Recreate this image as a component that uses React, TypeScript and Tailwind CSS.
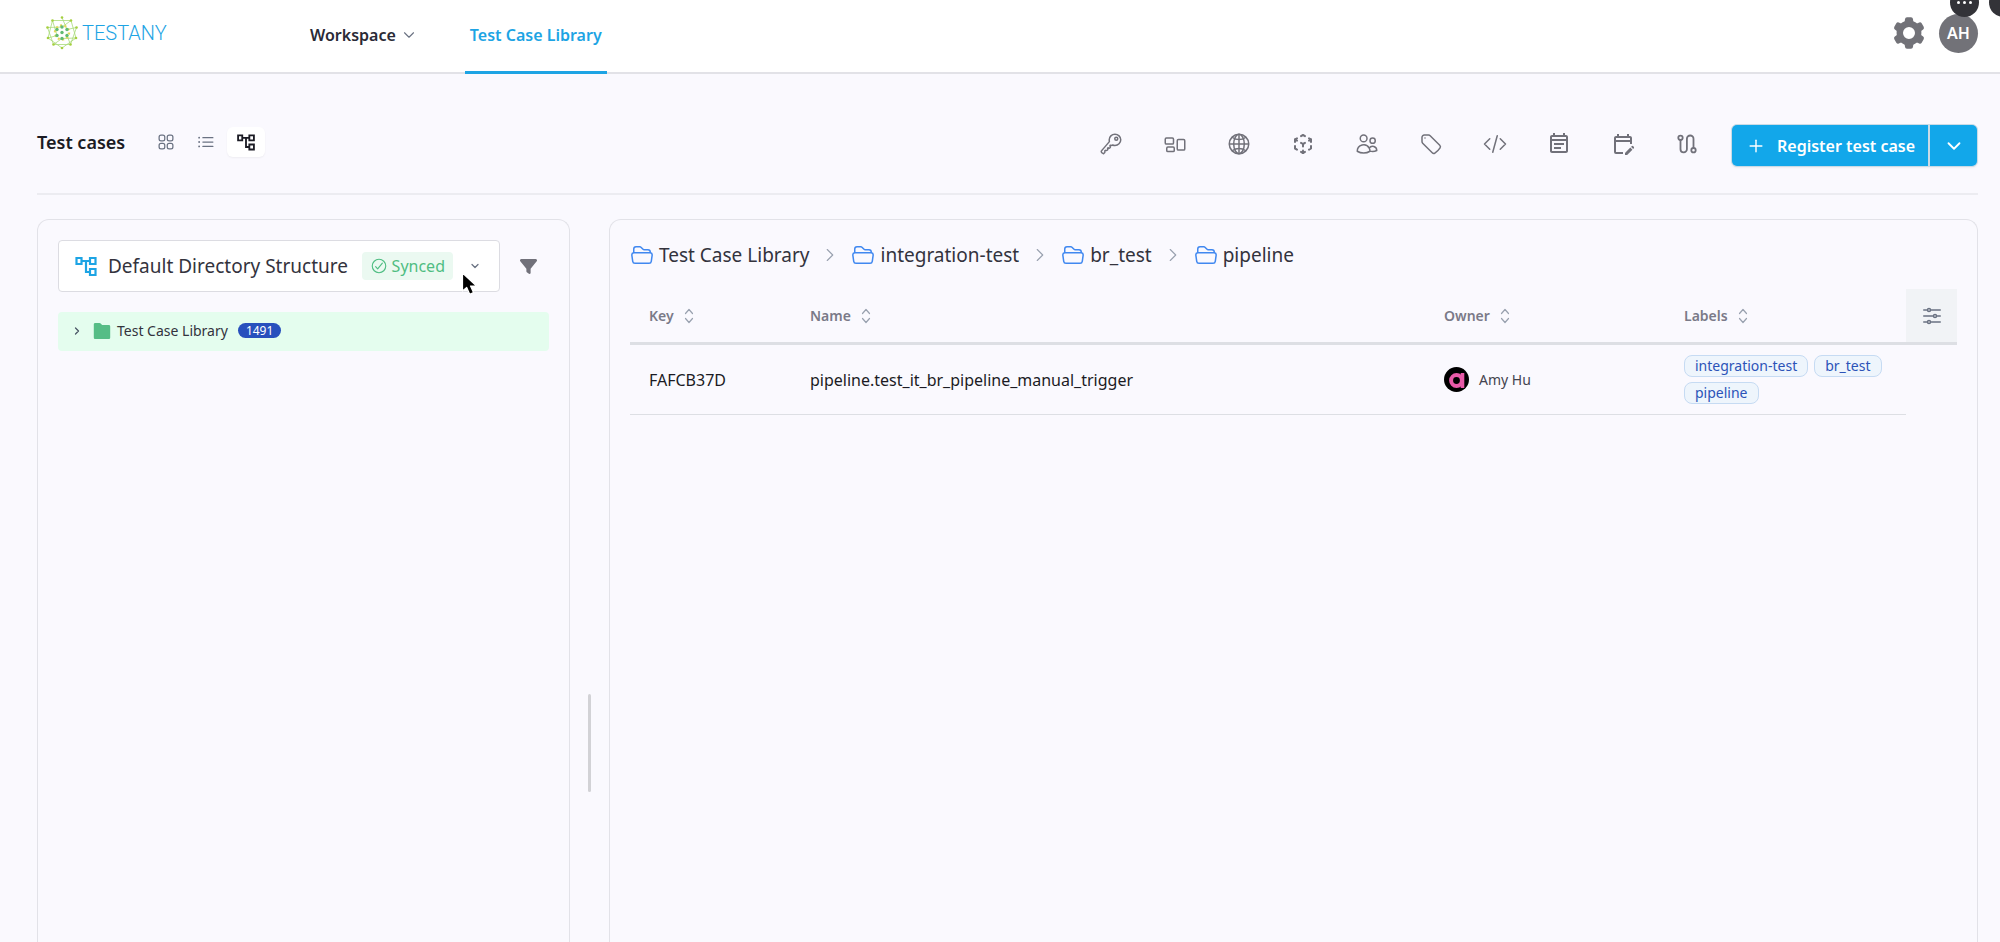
import type { ReactNode } from "react";
import { FaFilter } from "react-icons/fa6";
import {
  HiOutlineAdjustmentsHorizontal,
  HiOutlineCodeBracket,
  HiOutlineFolderOpen,
  HiOutlineListBullet,
  HiOutlineRectangleGroup,
  HiOutlineSquares2X2,
  HiOutlineTag,
  HiOutlineUsers,
} from "react-icons/hi2";
import { IoCheckmarkCircleOutline, IoGlobeOutline, IoKeyOutline } from "react-icons/io5";
import { MdOutlineEditCalendar, MdOutlineEventNote } from "react-icons/md";
import { TbCube3dSphere } from "react-icons/tb";
import { ChevronDown, ChevronRight, Plus } from "lucide-react";

interface Tool {
  label: string;
  icon: ReactNode;
}

interface TestCase {
  key: string;
  name: string;
  owner: string;
  labels: string[];
}

const tools: Tool[] = [
  { label: "Credentials", icon: <IoKeyOutline size={24} /> },
  { label: "Groups", icon: <HiOutlineRectangleGroup size={24} /> },
  { label: "Environments", icon: <IoGlobeOutline size={26} /> },
  { label: "Packages", icon: <TbCube3dSphere size={24} /> },
  { label: "Users", icon: <HiOutlineUsers size={24} /> },
  { label: "Tags", icon: <HiOutlineTag size={24} /> },
  { label: "Code", icon: <HiOutlineCodeBracket size={24} /> },
  { label: "Plans", icon: <MdOutlineEventNote size={24} /> },
  { label: "Edit schedule", icon: <MdOutlineEditCalendar size={24} /> },
  { label: "Pipelines", icon: <RouteIcon /> },
];

const crumbs = ["Test Case Library", "integration-test", "br_test", "pipeline"];

const columns = [
  { title: "Key", width: "w-[161px]" },
  { title: "Name", width: "w-auto" },
  { title: "Owner", width: "w-60" },
  { title: "Labels", width: "w-[241px]" },
];

const testCases: TestCase[] = [
  {
    key: "FAFCB37D",
    name: "pipeline.test_it_br_pipeline_manual_trigger",
    owner: "Amy Hu",
    labels: ["integration-test", "br_test", "pipeline"],
  },
];

function RouteIcon() {
  return (
    <svg width="24" height="24" viewBox="0 0 24 24" fill="none" stroke="currentColor" strokeWidth="1.8">
      <circle cx="5.5" cy="5.8" r="2.2" />
      <circle cx="18.5" cy="18.2" r="2.2" />
      <path d="M5.5 8v9.2a3.2 3.2 0 0 0 6.4 0V6.8a3.3 3.3 0 0 1 6.6 0V16" />
    </svg>
  );
}

function GearIcon() {
  const teeth = [0, 60, 120, 180, 240, 300];
  return (
    <svg width="32" height="32" viewBox="0 0 32 32" fill="none" stroke="currentColor">
      <circle cx="16" cy="16" r="9.2" strokeWidth="6.4" />
      {teeth.map((angle) => (
        <path
          key={angle}
          d="M13.6 5.2 14 2.2h4l.4 3z"
          fill="currentColor"
          strokeWidth="4"
          strokeLinejoin="round"
          transform={`rotate(${angle} 16 16)`}
        />
      ))}
    </svg>
  );
}

function TreeIcon({ size }: { size: number }) {
  return (
    <svg width={size} height={size} viewBox="0 0 24 24" fill="none" stroke="currentColor" strokeWidth="2.2">
      <path d="M2.500 4h5v6h-5zM16 4h5.500v6H16zM16 15h5.500v6H16zM8 7h8M12 7v11h4" />
    </svg>
  );
}

function FolderIcon() {
  return (
    <svg width="18" height="18" viewBox="0 0 18 18" className="text-[#56bd86]">
      <path
        fill="currentColor"
        d="M2.2 1h4.3c.5 0 .9.2 1.2.5l1.4 1.6h6.7c.8 0 1.4.6 1.4 1.4v10.9c0 .9-.7 1.6-1.6 1.6H2.4C1.5 17 .8 16.3.8 15.4V2.4C.8 1.6 1.4 1 2.2 1z"
      />
    </svg>
  );
}

function SortIcon() {
  return (
    <svg
      width="10"
      height="16"
      viewBox="0 0 10 16"
      fill="none"
      stroke="currentColor"
      strokeWidth="1.2"
      strokeLinecap="round"
      strokeLinejoin="round"
      className="text-gray-400"
    >
      <path d="M1.5 5.5 5 1.5l3.5 4M1.5 10.5l3.5 4 3.5-4" />
    </svg>
  );
}

function Logo() {
  const outer = [
    [16, 1.5], [25, 4.5], [30.5, 11.5], [30, 22], [24.5, 28.5],
    [16, 32], [7.5, 28.5], [2, 22], [1.5, 11.5], [6.5, 4.5],
  ];
  const inner = [
    [16, 16.5], [16, 11], [21, 13.5], [21, 19.5], [16, 22.5], [11, 19.5], [11, 13.5],
  ];
  return (
    <svg width="32" height="34" viewBox="0 0 32 34" fill="none">
      <path
        d="M6.5 4.5 25 4.5 30 22 16 32 2 22 6.5 4.5M16 1.5 21 13.5 30.5 11.5 24.5 28.5 7.5 28.5 1.5 11.5 16 11M6.5 4.5 11 19.5 2 22M25 4.5 16 11M30 22 16 22.5 7.5 28.5M24.5 28.5 21 19.5"
        stroke="#a8da78"
        strokeWidth="0.8"
      />
      <circle cx="16" cy="16.5" r="7" stroke="#e3d95a" strokeWidth="2.4" strokeDasharray="2 2.4" />
      {outer.map(([x, y]) => (
        <circle key={`${x}-${y}`} cx={x} cy={y} r="1.3" fill="#a5cf3f" />
      ))}
      {inner.map(([x, y]) => (
        <circle key={`${x}-${y}`} cx={x} cy={y} r="1.7" fill="#62bb72" />
      ))}
    </svg>
  );
}

function Cursor() {
  return (
    <svg
      width="18"
      height="26"
      viewBox="0 0 18 26"
      className="pointer-events-none absolute top-[31px] right-5"
    >
      <path
        d="M1.5 1v18l4.2-3.6 3 6.8 3.8-1.6-3-6.6h6z"
        fill="#000"
        stroke="#fff"
        strokeWidth="1.2"
        strokeLinejoin="round"
      />
    </svg>
  );
}

function Header() {
  return (
    <header className="relative flex h-[74px] items-stretch border-b-2 border-[#e2e2e7] bg-white pr-[22px] pl-[46px]">
      <a href="#home" className="flex w-[264px] items-center gap-1 pb-1.5">
        <Logo />
        <span className="font-[Roboto] text-xl leading-6 font-light text-[#1da4e4]">TESTANY</span>
      </a>
      <nav className="flex text-base font-semibold">
        <button type="button" className="flex items-center gap-1 pb-0.5 text-[#2a2a36]">
          Workspace
          <ChevronDown size={18} strokeWidth={1.5} className="text-gray-500" />
        </button>
        <a
          href="#library"
          className="-mb-0.5 ml-[47px] flex items-center border-b-3 border-[#1da4e4] px-[5px] pb-0.5 text-[#1da4e4]"
        >
          Test Case Library
        </a>
      </nav>
      <div className="ml-auto flex items-center gap-3.5 pb-1.5">
        <button type="button" aria-label="Settings" className="text-[#727278]">
          <GearIcon />
        </button>
        <button
          type="button"
          className="flex size-[39px] items-center justify-center rounded-full bg-[#727278] text-base font-semibold text-white"
        >
          AH
        </button>
      </div>
      <div className="absolute top-0 right-0 flex h-[17px] w-[50px] gap-2.5 overflow-hidden">
        <span className="-mt-3 flex size-[29px] shrink-0 items-center justify-center gap-[3px] rounded-full bg-[#333338]">
          <i className="size-[3px] rounded-full bg-white" />
          <i className="size-[3px] rounded-full bg-white" />
          <i className="size-[3px] rounded-full bg-white" />
        </span>
        <span className="-mt-3 size-[29px] shrink-0 rounded-full bg-[#333338]" />
      </div>
    </header>
  );
}

function Toolbar() {
  return (
    <div className="flex h-[121px] items-center border-b-2 border-[#ececf1] pt-7">
      <h1 className="pb-3 text-lg font-semibold text-[#1b1b24]">Test cases</h1>
      <div className="ml-[22px] flex items-center gap-[2px] pb-3 text-gray-500">
        <button type="button" aria-label="Grid view" className="flex h-[30px] w-[38px] items-center justify-center">
          <HiOutlineSquares2X2 size={20} />
        </button>
        <button type="button" aria-label="List view" className="flex h-[30px] w-[38px] items-center justify-center">
          <HiOutlineListBullet size={20} />
        </button>
        <button
          type="button"
          aria-label="Tree view"
          className="flex h-[30px] w-[38px] items-center justify-center rounded-md bg-white text-[#1b1b24] shadow-xs"
        >
          <TreeIcon size={20} />
        </button>
      </div>
      <div className="ml-auto flex items-center gap-10 pb-2 text-[#71717a]">
        {tools.map((tool) => (
          <button
            key={tool.label}
            type="button"
            aria-label={tool.label}
            className="flex size-6 items-center justify-center"
          >
            {tool.icon}
          </button>
        ))}
      </div>
      <div className="mb-1 ml-8 flex h-[43px] overflow-hidden rounded-md border border-[#c9dbe6] bg-[#c9dbe6] text-white shadow-xs">
        <button type="button" className="flex w-[196px] items-center gap-[11px] bg-[#12a7ea] pl-3.5 text-base font-semibold whitespace-nowrap">
          <Plus size={20} strokeWidth={1.7} />
          Register test case
        </button>
        <button
          type="button"
          aria-label="More register options"
          className="ml-0.5 flex w-[47px] items-center justify-center bg-[#12a7ea]"
        >
          <ChevronDown size={22} strokeWidth={2} />
        </button>
      </div>
    </div>
  );
}

function DirectoryPanel() {
  return (
    <aside className="w-[533px] shrink-0 rounded-t-xl border border-b-0 border-[#e2e2e8] px-5 pt-5">
      <div className="flex items-center">
        <button
          type="button"
          className="relative flex h-[52px] w-[442px] items-center rounded-sm border border-[#dcdce2] bg-white pl-[15px]"
        >
          <span className="text-[#1da4e4]">
            <TreeIcon size={24} />
          </span>
          <span className="ml-2.5 text-[19px] whitespace-nowrap text-[#33333d]">
            Default Directory Structure
          </span>
          <span className="ml-auto flex h-7 items-center gap-1 rounded-sm bg-[#ebf9f1] px-2 text-base text-[#4fbd82]">
            <IoCheckmarkCircleOutline size={18} />
            Synced
          </span>
          <ChevronDown size={12} strokeWidth={2.5} className="mr-[18px] ml-4 text-gray-500" />
          <Cursor />
        </button>
        <button type="button" aria-label="Filter" className="ml-5 text-[#71717a]">
          <FaFilter size={17} />
        </button>
      </div>
      <div className="mt-5 flex h-[39px] items-center rounded-sm bg-[#e4fdee] pb-0.5 pl-[13px]">
        <button type="button" aria-label="Expand" className="text-gray-600">
          <ChevronRight size={12} strokeWidth={2.5} />
        </button>
        <span className="mr-1.5 ml-2.5">
          <FolderIcon />
        </span>
        <span className="text-[14px] text-[#33333d]">Test Case Library</span>
        <span className="ml-2.5 rounded-full bg-[#2850bd] px-2 text-xs leading-[15px] text-white">1491</span>
      </div>
    </aside>
  );
}

function CasesPanel() {
  return (
    <section className="min-w-0 flex-1 rounded-t-xl border border-b-0 border-[#e2e2e8] px-5 pt-[19px]">
      <nav aria-label="Breadcrumb" className="flex h-8 items-center">
        {crumbs.map((crumb, i) => (
          <div key={crumb} className="flex items-center">
            {i > 0 && (
              <ChevronRight size={22} strokeWidth={1.2} className="mx-2.5 text-gray-400" />
            )}
            <a href={`#${crumb}`} className="flex items-center gap-[5px] text-[19px] text-[#33333d]">
              <HiOutlineFolderOpen size={24} className="text-[#4088f0]" />
              {crumb}
            </a>
          </div>
        ))}
      </nav>
      <table className="mt-[18px] w-full table-fixed border-separate border-spacing-0 text-left">
        <thead>
          <tr className="h-14">
            {columns.map((column) => (
              <th
                key={column.title}
                className={`${column.width} border-b-3 border-[#dddfe4] pl-[19px] text-[14px] font-semibold text-[#7a7a88]`}
              >
                <span className="flex items-center gap-2.5">
                  {column.title}
                  <SortIcon />
                </span>
              </th>
            ))}
            <th className="w-[51px] border-b-3 border-[#dddfe4] bg-[#f1f3f6] p-0">
              <button
                type="button"
                aria-label="Table settings"
                className="flex w-full items-center justify-center text-gray-500"
              >
                <HiOutlineAdjustmentsHorizontal size={24} />
              </button>
            </th>
          </tr>
        </thead>
        <tbody>
          {testCases.map((testCase) => (
            <tr key={testCase.key} className="h-[70px]">
              <td className="border-b border-[#dddfe4] pl-[19px] text-base text-[#1b1b24]">{testCase.key}</td>
              <td className="border-b border-[#dddfe4] pl-[19px] text-base text-[#1b1b24]">{testCase.name}</td>
              <td className="border-b border-[#dddfe4] pl-[19px]">
                <div className="flex items-center gap-2.5 text-[14px] text-[#44444f]">
                  <span className="flex size-[25px] items-center justify-center overflow-hidden rounded-full bg-black">
                    <svg width="20" height="20" viewBox="0 0 20 20" fill="none" stroke="#e85aa8" strokeWidth="4">
                      <circle cx="9.5" cy="10.5" r="5.4" />
                      <path d="M15.500 3v15" strokeWidth="3.600" />
                    </svg>
                  </span>
                  {testCase.owner}
                </div>
              </td>
              <td className="border-b border-[#dddfe4] pr-4 pl-[19px]">
                <div className="flex flex-wrap gap-x-1.5 gap-y-[5px]">
                  {testCase.labels.map((label) => (
                    <span
                      key={label}
                      className="rounded-lg border border-[#c6dbf3] bg-[#eef5fc] px-2.5 text-[14px] leading-5 text-[#2c53b8]"
                    >
                      {label}
                    </span>
                  ))}
                </div>
              </td>
              <td />
            </tr>
          ))}
        </tbody>
      </table>
    </section>
  );
}

export default function App() {
  return (
    <div className="flex min-h-screen flex-col overflow-x-hidden bg-[#faf9fe] font-['Noto_Sans','Open_Sans',sans-serif]">
      <Header />
      <main className="flex flex-1 flex-col pr-[22px] pl-[37px]">
        <Toolbar />
        <div className="mt-6 flex flex-1">
          <DirectoryPanel />
          <div className="flex w-[39px] shrink-0 items-end justify-center pb-[150px]">
            <div className="h-[98px] w-[3px] rounded-full bg-[#d2d2d6]" />
          </div>
          <CasesPanel />
        </div>
      </main>
    </div>
  );
}
